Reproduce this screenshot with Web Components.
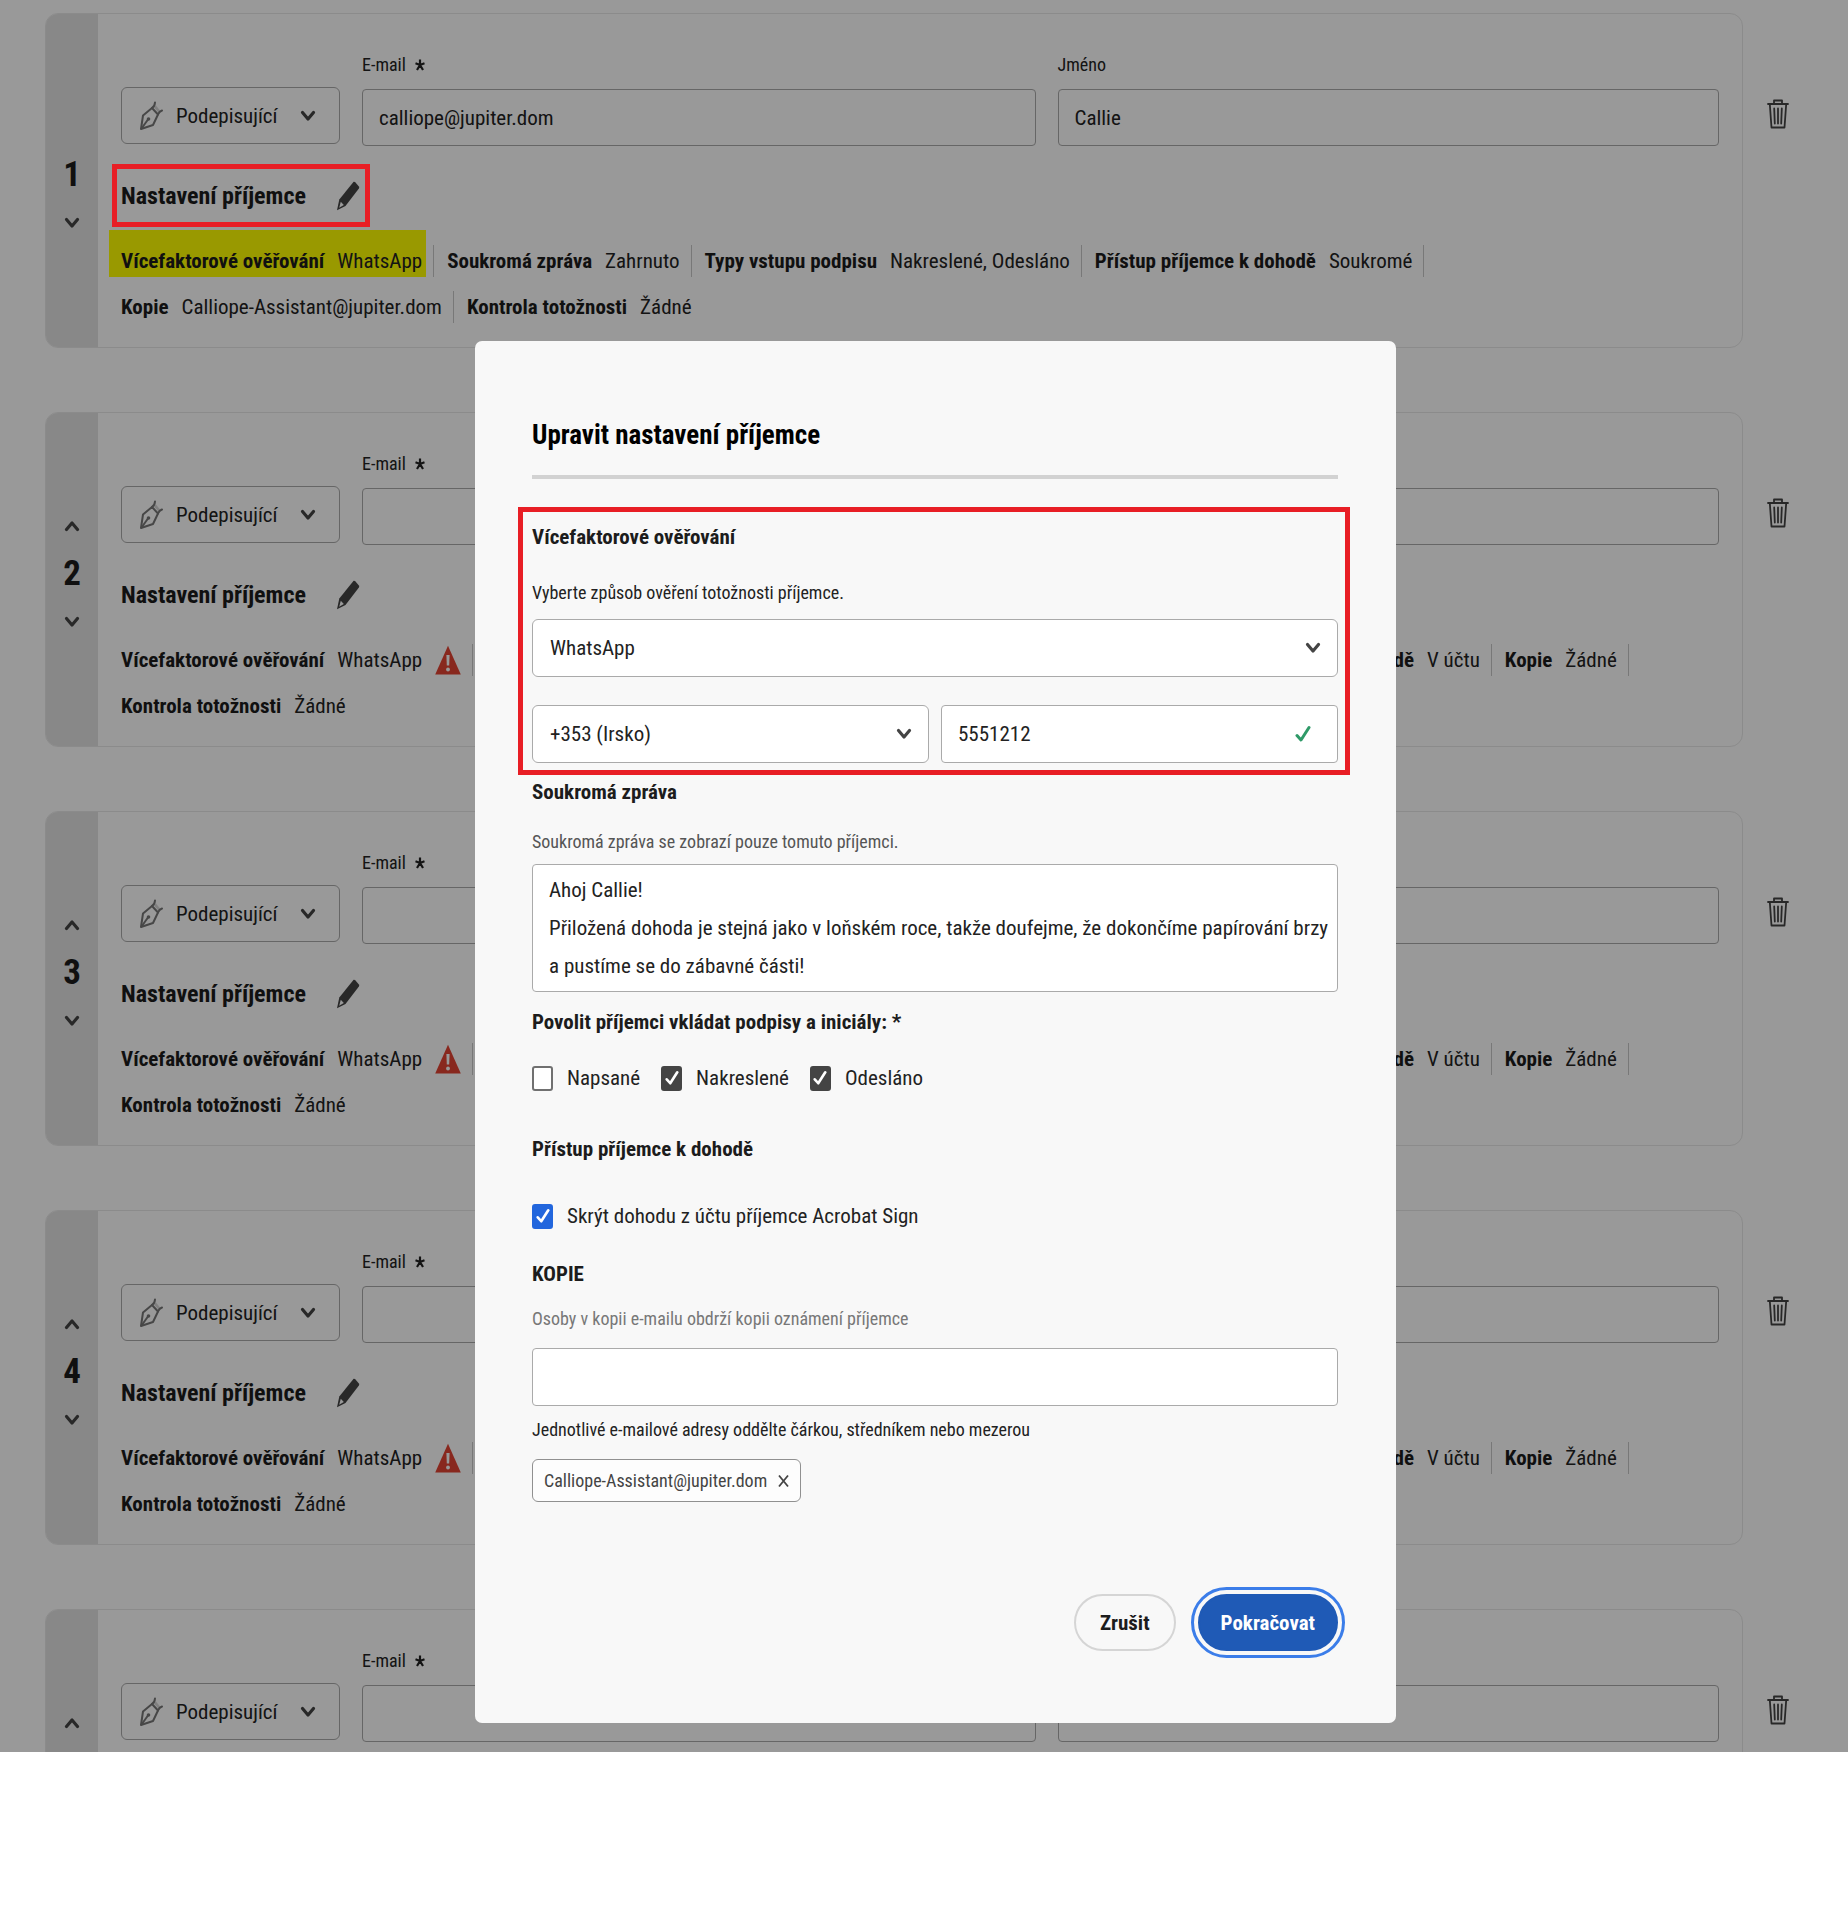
<!DOCTYPE html>
<html lang="cs">
<head>
<meta charset="utf-8">
<meta name="viewport" content="width=device-width, initial-scale=1">
<title>Upravit nastavení příjemce</title>
<style>
    :root{
        --text: #222;
        --heading: #1c1c1c;
        --muted: #555;
        --faint: #777;
        --icon: #444;
        --line: #e8e8e8;
        --field-line: #aaa;
        --rail: #e3e3e3;
        --panel: #f8f8f8;
        --accent: #1f5ab6;
        --focus: #3b7de9;
        --mark: #e81e25;
        --size-s: 18px;
        --size-m: 21px;
        --size-l: 24px;
        --size-xl: 27px;
        --field-height: 58px;
    }
    html{
        background: #fff;
    }
    body{
        margin: 0;
        color: var(--text);
        font: 21px/28px "Roboto Condensed", Roboto, "Noto Sans", sans-serif;
    }
</style>
</head>
<body>
<recipients-page>
    <recipient-card order="1" first email="calliope@jupiter.dom" name="Callie">
        <setting-item slot="settings" label="Vícefaktorové ověřování" marked>WhatsApp</setting-item>
        <setting-item slot="settings" label="Soukromá zpráva">Zahrnuto</setting-item>
        <setting-item slot="settings" label="Typy vstupu podpisu">Nakreslené, Odesláno</setting-item>
        <setting-item slot="settings" label="Přístup příjemce k dohodě">Soukromé</setting-item>
        <setting-item slot="settings" label="Kopie">Calliope-Assistant@jupiter.dom</setting-item>
        <setting-item slot="settings" label="Kontrola totožnosti" last>Žádné</setting-item>
    </recipient-card>
    <recipient-card order="2"></recipient-card>
    <recipient-card order="3"></recipient-card>
    <recipient-card order="4"></recipient-card>
    <recipient-card pending></recipient-card>

    <settings-dialog slot="dialog" heading="Upravit nastavení příjemce">
        <mfa-section></mfa-section>
        <message-section></message-section>
        <access-section></access-section>
        <copy-section></copy-section>
    </settings-dialog>
</recipients-page>

<script>
const ICONS = {
    chevron: '<svg width="16" height="12" viewBox="0 0 16 12"><path d="M2.500 2.500 8 9l5.500-6.500" fill="none" stroke="currentColor" stroke-width="3.200" stroke-linecap="round" stroke-linejoin="round"/></svg>',
    pen: '<svg width="24" height="30" viewBox="0 0 24 30"><g fill="none" stroke="currentColor" stroke-width="2" stroke-linejoin="round" stroke-linecap="round"><path d="M2 28 4 14.500 13 7l6 6.500L14 24 2 28z"/><path d="M13 7c2-1 2.800-3 3-5.500M19 13.500c1-2.500 2.300-3.500 4-4"/><path d="m2.500 27.500 6.500-9"/></g><path d="m14.500 6 5 5.500 1.500-2-4-5z" fill="currentColor" opacity=".3"/><circle cx="9.500" cy="18" r="1.800" fill="currentColor"/></svg>',
    pencil: '<svg width="24" height="30" viewBox="0 0 24 30"><path d="M17.200 1.200c.6-.7 1.500-.6 2.100 0l3.600 4.300c.5.600.5 1.300 0 2L9.500 25 1 29.200 3.300 18.500z" fill="currentColor"/><path d="m4.800 20.800 3 3.300-4.600 2.600z" fill="#fff"/></svg>',
    trash: '<svg width="22" height="30" viewBox="0 0 22 30"><g fill="none" stroke="currentColor" stroke-width="1.800" stroke-linecap="round" stroke-linejoin="round"><path d="M1 5h20M7 5V1.500h8V5M2.800 5l1.700 23.500h13L19.200 5M11 9.500v15M7.200 9.500l.6 15M14.800 9.500l-.6 15"/></g></svg>',
    warning: '<svg width="26" height="30" viewBox="0 0 26 30"><path d="M13 .8 25.800 29.500H.2z" fill="#e34433"/><path d="M11.400 10h3.200l-.4 10.500h-2.400z" fill="#fff"/><circle cx="13" cy="24.500" r="1.900" fill="#fff"/></svg>',
    check: '<svg width="16" height="18" viewBox="0 0 16 18"><path d="M2 10.500 6 15 14 2.500" fill="none" stroke="currentColor" stroke-width="3" stroke-linecap="round" stroke-linejoin="round"/></svg>',
    cross: '<svg width="11" height="14" viewBox="0 0 11 14"><path d="m1 1.500 9 11M10 1.500l-9 11" fill="none" stroke="currentColor" stroke-width="1.800"/></svg>',
    star: '<svg width="10" height="12" viewBox="0 0 10 12"><path d="M5 .5V6M5 6 .5 4.300M5 6l4.500-1.700M5 6 2 11M5 6l3 5" fill="none" stroke="currentColor" stroke-width="2.200"/></svg>'
};

// shared by every element that draws form controls
const controls = `
    *{
        box-sizing: border-box;
    }
    svg{
        display: block;
        flex: none;
    }
    input, select, textarea, button{
        margin: 0;
        color: inherit;
        font: inherit;
    }
    .field{
        width: 100%;
        min-width: 0;
        height: var(--field-height);
        padding: 0 16px;
        border: 1px solid var(--field-line);
        border-radius: 4px;
        background: #fff;
        outline: none;
    }
    .title{
        margin: 0;
        color: var(--heading);
        font-size: var(--size-m);
        font-weight: 700;
        line-height: 28px;
    }
    .help{
        margin: 0;
        font-size: var(--size-s);
        line-height: 24px;
    }
`;

class BaseElement extends HTMLElement{
    constructor(){
        super();
        this.attachShadow({mode: 'open'});
    }

    connectedCallback(){
        const template = document.createElement('template');
        template.innerHTML = `<style>${controls}${this.styles()}</style>${this.markup()}`;
        this.shadowRoot.replaceChildren(template.content.cloneNode(true));
    }

    attr(name){
        return this.getAttribute(name) || '';
    }
}

class RecipientsPage extends BaseElement{
    styles(){
        return `
            :host{
                display: block;
                position: relative;
                height: calc(100vh - 165px);
                overflow: hidden;
            }
            .list{
                display: grid;
                gap: 64px;
                padding: 13px 59px 0 45px;
            }
            .backdrop{
                position: absolute;
                inset: 0;
                z-index: 10;
                display: flex;
                justify-content: center;
                align-items: flex-start;
                padding: 341px 0 0 23px;
                background: rgba(0,0,0,.4);
            }
        `;
    }

    markup(){
        return `
            <main class="list"><slot></slot></main>
            <div class="backdrop"><slot name="dialog"></slot></div>
        `;
    }
}

class SettingItem extends BaseElement{
    styles(){
        return `
            :host{
                display: flex;
                align-items: center;
                gap: 13px;
                position: relative;
                height: 46px;
                padding-right: 12px;
            }
            :host::after{
                content: '';
                position: absolute;
                right: 0;
                top: 7px;
                width: 1px;
                height: 32px;
                background: #c8c8c8;
            }
            :host([last])::after{
                display: none;
            }
            :host([marked])::before{
                content: '';
                position: absolute;
                inset: -8px 8px 7px -12px;
                z-index: -1;
                background: #ff0;
            }
            b{
                color: var(--heading);
            }
        `;
    }

    markup(){
        const alert = this.hasAttribute('alert') ? ICONS.warning : '';
        return `<b>${this.attr('label')}</b><slot></slot>${alert}`;
    }
}

class RecipientCard extends BaseElement{
    styles(){
        return `
            :host{
                --field-height: 57px;
                display: grid;
                grid-template-columns: 1fr 22px;
                gap: 24px;
            }
            .card{
                display: flex;
                height: 335px;
                border: 1px solid var(--line);
                border-radius: 13px;
            }
            .rail{
                display: flex;
                flex-direction: column;
                align-items: center;
                gap: 30px;
                width: 52px;
                padding-top: 107px;
                border-radius: 12px 0 0 12px;
                background: var(--rail);
                color: var(--icon);
            }
            .rail button, .edit, .remove{
                padding: 0;
                border: 0;
                background: none;
                color: var(--icon);
                line-height: 0;
            }
            .remove{
                align-self: start;
                margin-top: 86px;
            }
            .rail .up{
                transform: rotate(180deg);
            }
            :host([first]) .up{
                visibility: hidden;
            }
            .rail b{
                color: var(--heading);
                font-size: 35px;
                line-height: 24px;
            }
            .content{
                flex: 1;
                min-width: 0;
                padding: 38px 23px 0;
            }
            .row{
                display: grid;
                grid-template-columns: 219px 673fr 661fr;
                gap: 22px;
                align-items: end;
            }
            .role{
                display: grid;
                align-items: center;
                padding-bottom: 2px;
                color: var(--icon);
            }
            .role > *{
                grid-area: 1 / 1;
            }
            .role select{
                appearance: none;
                padding: 0 40px 0 54px;
                border-radius: 6px;
                color: var(--text);
            }
            .role span{
                z-index: 1;
                pointer-events: none;
            }
            .role .pen{
                margin-left: 18px;
                color: #777;
            }
            .role .arrow{
                justify-self: end;
                margin-right: 24px;
            }
            .text label{
                display: flex;
                align-items: center;
                gap: 9px;
                margin-bottom: 11px;
                font-size: var(--size-s);
                line-height: 26px;
            }
            .heading{
                display: inline-flex;
                align-items: center;
                gap: 30px;
                position: relative;
                height: 52px;
                margin-top: 24px;
            }
            h2{
                margin: 0;
                color: var(--heading);
                font-size: var(--size-l);
                line-height: 32px;
            }
            :host([first]) .heading::after{
                content: '';
                position: absolute;
                inset: -6px -10px -5px -9px;
                z-index: 20;
                border: 5px solid var(--mark);
                pointer-events: none;
            }
            .settings{
                display: flex;
                flex-wrap: wrap;
                column-gap: 13px;
                margin-top: 16px;
                padding-right: 60px;
            }
        `;
    }

    details(){
        return `
            <div class="heading">
                <h2>Nastavení příjemce</h2>
                <button class="edit" aria-label="Upravit">${ICONS.pencil}</button>
            </div>
            <div class="settings">
                <slot name="settings">
                    <setting-item label="Vícefaktorové ověřování" alert>WhatsApp</setting-item>
                    <setting-item label="Soukromá zpráva">Žádné</setting-item>
                    <setting-item label="Typy vstupu podpisu">Napsané, Nakreslené, Odesláno</setting-item>
                    <setting-item label="Přístup příjemce k dohodě">V účtu</setting-item>
                    <setting-item label="Kopie">Žádné</setting-item>
                    <setting-item label="Kontrola totožnosti" last>Žádné</setting-item>
                </slot>
            </div>
        `;
    }

    markup(){
        // a pending card has no order and no settings yet
        const pending = this.hasAttribute('pending');
        return `
            <section class="card">
                <div class="rail">
                    <button class="up" aria-label="Nahoru">${ICONS.chevron}</button>
                    <b>${this.attr('order')}</b>
                    ${pending ? '' : `<button aria-label="Dolů">${ICONS.chevron}</button>`}
                </div>
                <div class="content">
                    <div class="row">
                        <div class="role">
                            <select class="field" aria-label="Role"><option>Podepisující</option></select>
                            <span class="pen">${ICONS.pen}</span>
                            <span class="arrow">${ICONS.chevron}</span>
                        </div>
                        <div class="text">
                            <label for="email">E-mail ${ICONS.star}</label>
                            <input class="field" id="email" type="email" value="${this.attr('email')}">
                        </div>
                        <div class="text">
                            <label for="name">Jméno</label>
                            <input class="field" id="name" type="text" value="${this.attr('name')}">
                        </div>
                    </div>
                    ${pending ? '' : this.details()}
                </div>
            </section>
            <button class="remove" aria-label="Odstranit">${ICONS.trash}</button>
        `;
    }
}

class SettingsDialog extends BaseElement{
    styles(){
        return `
            :host{
                display: block;
                box-sizing: border-box;
                width: 921px;
                max-width: 90%;
                padding: 76px 58px 72px 57px;
                border-radius: 7px;
                background: var(--panel);
            }
            h1{
                margin: 0 0 40px;
                padding-bottom: 22px;
                border-bottom: 4px solid #d2d2d2;
                color: #000;
                font-size: var(--size-xl);
                line-height: 36px;
            }
            footer{
                display: flex;
                justify-content: flex-end;
                gap: 22px;
                margin-top: 92px;
            }
            footer button{
                height: 57px;
                padding: 0 24px;
                border: 2px solid #d5d5d5;
                border-radius: 29px;
                background: none;
                color: var(--heading);
                font-weight: 700;
            }
            footer .primary{
                padding: 0 21px;
                border-color: var(--accent);
                background: var(--accent);
                color: #fff;
                outline: 3px solid var(--focus);
                outline-offset: 4px;
            }
        `;
    }

    markup(){
        return `
            <h1>${this.attr('heading')}</h1>
            <slot></slot>
            <footer>
                <button>Zrušit</button>
                <button class="primary">Pokračovat</button>
            </footer>
        `;
    }
}

class PickList extends BaseElement{
    styles(){
        return `
            :host{
                display: grid;
                align-items: center;
                color: var(--icon);
            }
            select, svg{
                grid-area: 1 / 1;
            }
            select.field{
                appearance: none;
                padding: 0 40px 0 17px;
                border-radius: 6px;
                color: var(--text);
            }
            svg{
                justify-self: end;
                margin-right: 17px;
                pointer-events: none;
            }
        `;
    }

    markup(){
        return `
            <select class="field" aria-label="${this.attr('label')}"><option>${this.attr('value')}</option></select>
            ${ICONS.chevron}
        `;
    }
}

class MfaSection extends BaseElement{
    styles(){
        return `
            :host{
                display: block;
                position: relative;
                padding-top: 4px;
            }
            :host::after{
                content: '';
                position: absolute;
                inset: -12px -12px -12px -14px;
                border: 5px solid var(--mark);
                pointer-events: none;
            }
            .help{
                margin: 30px 0 14px;
            }
            .phone{
                display: grid;
                grid-template-columns: 1fr 1fr;
                gap: 12px;
                margin-top: 28px;
            }
            .number{
                display: grid;
                align-items: center;
                color: #2f9a68;
            }
            .number input, .number svg{
                grid-area: 1 / 1;
            }
            .number input{
                color: var(--text);
            }
            .number svg{
                justify-self: end;
                margin-right: 27px;
            }
        `;
    }

    markup(){
        return `
            <h2 class="title">Vícefaktorové ověřování</h2>
            <p class="help">Vyberte způsob ověření totožnosti příjemce.</p>
            <pick-list label="Způsob ověření" value="WhatsApp"></pick-list>
            <div class="phone">
                <pick-list label="Kód země" value="+353 (Irsko)"></pick-list>
                <div class="number">
                    <input class="field" type="tel" aria-label="Telefonní číslo" value="5551212">
                    ${ICONS.check}
                </div>
            </div>
        `;
    }
}

class MessageSection extends BaseElement{
    styles(){
        return `
            :host{
                display: block;
                margin-top: 15px;
            }
            .help{
                display: block;
                margin: 24px 0 10px;
                color: var(--muted);
            }
            textarea.field{
                display: block;
                height: 128px;
                padding: 6px 8px 6px 16px;
                line-height: 38px;
                resize: none;
                overflow: hidden;
            }
        `;
    }

    markup(){
        return `
            <h2 class="title">Soukromá zpráva</h2>
            <label class="help" for="message">Soukromá zpráva se zobrazí pouze tomuto příjemci.</label>
            <textarea class="field" id="message">Ahoj Callie!
Přiložená dohoda je stejná jako v loňském roce, takže doufejme, že dokončíme papírování brzy a pustíme se do zábavné části!</textarea>
        `;
    }
}

class CheckOption extends BaseElement{
    styles(){
        return `
            label{
                display: flex;
                align-items: center;
                gap: 14px;
                line-height: 28px;
            }
            .box{
                display: grid;
                place-items: center;
                color: #fff;
            }
            .box > *{
                grid-area: 1 / 1;
            }
            input{
                appearance: none;
                width: 21px;
                height: 25px;
                border: 2px solid #707070;
                border-radius: 3px;
                background: #fff;
            }
            input:checked{
                border-color: var(--check, #444);
                background: var(--check, #444);
            }
            svg{
                width: 14px;
                pointer-events: none;
            }
        `;
    }

    markup(){
        const checked = this.hasAttribute('checked') ? 'checked' : '';
        return `
            <label>
                <span class="box"><input type="checkbox" ${checked}>${checked && ICONS.check}</span>
                <slot></slot>
            </label>
        `;
    }
}

class AccessSection extends BaseElement{
    styles(){
        return `
            :host{
                display: block;
                margin-top: 16px;
            }
            .options{
                display: flex;
                gap: 21px;
                margin: 28px 0 43px;
            }
            .account{
                --check: #2266dd;
                display: block;
                margin-top: 39px;
            }
        `;
    }

    markup(){
        return `
            <h2 class="title">Povolit příjemci vkládat podpisy a iniciály: *</h2>
            <div class="options">
                <check-option>Napsané</check-option>
                <check-option checked>Nakreslené</check-option>
                <check-option checked>Odesláno</check-option>
            </div>
            <h2 class="title">Přístup příjemce k dohodě</h2>
            <check-option class="account" checked>Skrýt dohodu z účtu příjemce Acrobat Sign</check-option>
        `;
    }
}

class CopySection extends BaseElement{
    styles(){
        return `
            :host{
                display: block;
                margin-top: 30px;
            }
            .help{
                display: block;
                margin: 19px 0 17px;
                color: var(--faint);
            }
            .help.note{
                margin: 12px 0 17px;
                color: var(--text);
            }
            .chip{
                display: inline-flex;
                align-items: center;
                gap: 11px;
                height: 43px;
                padding: 0 11px;
                border: 1px solid #909090;
                border-radius: 6px;
                background: #fdfdfd;
                color: var(--icon);
                font-size: var(--size-s);
            }
            .chip button{
                padding: 0;
                border: 0;
                background: none;
            }
        `;
    }

    markup(){
        return `
            <h2 class="title">KOPIE</h2>
            <label class="help" for="copy">Osoby v kopii e-mailu obdrží kopii oznámení příjemce</label>
            <input class="field" id="copy" type="text">
            <p class="help note">Jednotlivé e-mailové adresy oddělte čárkou, středníkem nebo mezerou</p>
            <span class="chip">Calliope-Assistant@jupiter.dom <button aria-label="Odebrat">${ICONS.cross}</button></span>
        `;
    }
}

window.customElements.define('recipients-page', RecipientsPage);
window.customElements.define('setting-item', SettingItem);
window.customElements.define('recipient-card', RecipientCard);
window.customElements.define('settings-dialog', SettingsDialog);
window.customElements.define('pick-list', PickList);
window.customElements.define('mfa-section', MfaSection);
window.customElements.define('message-section', MessageSection);
window.customElements.define('check-option', CheckOption);
window.customElements.define('access-section', AccessSection);
window.customElements.define('copy-section', CopySection);
</script>
</body>
</html>
